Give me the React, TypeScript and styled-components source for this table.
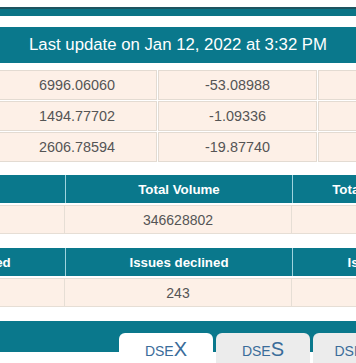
import React from 'react';
import styled, { createGlobalStyle } from 'styled-components';

const GlobalStyle = createGlobalStyle`
  html, body {
    margin: 0;
    padding: 0;
    background: #fff;
    overflow: hidden;
  }
  body {
    font-family: "Liberation Sans", Arial, sans-serif;
  }
`;

const TEAL = '#0a788c';

const Page = styled.div`
  width: 356px;
  height: 363px;
  overflow: hidden;
  padding-top: 7px;
  box-sizing: border-box;
`;

const TopStrip = styled.div`
  height: 7px;
  border-top: 2px solid #1d5460;
  background: #0b7486;
  margin-bottom: 11px;
`;

const UpdateBar = styled.div`
  height: 36px;
  display: flex;
  align-items: center;
  justify-content: center;
  background: ${TEAL};
  color: #fff;
  font-size: 16.75px;
  white-space: nowrap;
`;

const IndexGrid = styled.div`
  display: grid;
  grid-template-columns: 160px 159px 160px;
  gap: 1px;
  margin: 7px 0 0 -3px;
  width: max-content;
`;

const ValueCell = styled.div`
  height: 30px;
  box-sizing: border-box;
  border: 1px solid #e3dbd2;
  background: #fdf0e7;
  color: #555;
  font-size: 14.4px;
  display: flex;
  align-items: center;
  justify-content: center;
  white-space: nowrap;
`;

const SummaryGrid = styled.div<{ $top: number }>`
  display: grid;
  grid-template-columns: 216px 227px 226px;
  row-gap: 2px;
  margin: ${(p) => p.$top}px 0 0 -151px;
  width: max-content;
`;

const HeadCell = styled.div`
  height: 28px;
  box-sizing: border-box;
  background: ${TEAL};
  border-left: 1px solid #9fd4de;
  color: #fff;
  font-weight: bold;
  font-size: 13.3px;
  display: flex;
  align-items: center;
  justify-content: center;
  white-space: nowrap;
`;

const DataCell = styled.div`
  height: 29px;
  box-sizing: border-box;
  background: #fdf0e7;
  border: 1px solid #e6ded5;
  border-left-width: 0;
  color: #555;
  font-size: 14px;
  display: flex;
  align-items: center;
  justify-content: center;
  white-space: nowrap;
`;

const TabBar = styled.div`
  margin-top: 14px;
  height: 31px;
  box-sizing: border-box;
  background: ${TEAL};
  padding: 12px 0 0 119px;
  display: flex;
  align-items: flex-start;
  gap: 3px;
`;

const Tab = styled.div<{ $active?: boolean }>`
  flex-shrink: 0;
  width: 94px;
  height: 30px;
  box-sizing: border-box;
  padding-top: 6px;
  border-radius: 6px 6px 0 0;
  background: ${(p) => (p.$active ? '#fff' : '#ececec')};
  color: #3a6c9a;
  display: flex;
  justify-content: center;
  align-items: baseline;
  line-height: 20px;
  white-space: nowrap;
`;

const TabPrefix = styled.span`
  font-size: 14px;
`;

const TabSuffix = styled.span`
  font-size: 20px;
`;

const indices = [
  ['6996.06060', '-53.08988', ''],
  ['1494.77702', '-1.09336', ''],
  ['2606.78594', '-19.87740', ''],
];

const volumeHeads = ['Total Trade', 'Total Volume', 'Total Value in Taka(mn)'];
const volumeData = ['182431', '346628802', ''];

const issueHeads = ['Issues advanced', 'Issues declined', 'Issues unchanged'];
const issueData = ['84', '243', ''];

const tabs = [
  { prefix: 'DSE', suffix: 'X', active: true },
  { prefix: 'DSE', suffix: 'S' },
  { prefix: 'DSE', suffix: '30' },
];

const Summary = ({ heads, data, top }: { heads: string[]; data: string[]; top: number }) => (
  <SummaryGrid $top={top}>
    {heads.map((h) => (
      <HeadCell key={h}>{h}</HeadCell>
    ))}
    {data.map((d, i) => (
      <DataCell key={i}>{d}</DataCell>
    ))}
  </SummaryGrid>
);

const App = (): JSX.Element => (
  <Page>
    <GlobalStyle />
    <TopStrip />
    <UpdateBar>Last update on Jan 12, 2022 at 3:32 PM</UpdateBar>
    <IndexGrid>
      {indices.map((row) =>
        row.map((v, i) => <ValueCell key={row[0] + i}>{v}</ValueCell>)
      )}
    </IndexGrid>
    <Summary heads={volumeHeads} data={volumeData} top={13} />
    <Summary heads={issueHeads} data={issueData} top={14} />
    <TabBar>
      {tabs.map((t) => (
        <Tab key={t.suffix} $active={t.active}>
          <TabPrefix>{t.prefix}</TabPrefix>
          <TabSuffix>{t.suffix}</TabSuffix>
        </Tab>
      ))}
    </TabBar>
  </Page>
);

export default App;
